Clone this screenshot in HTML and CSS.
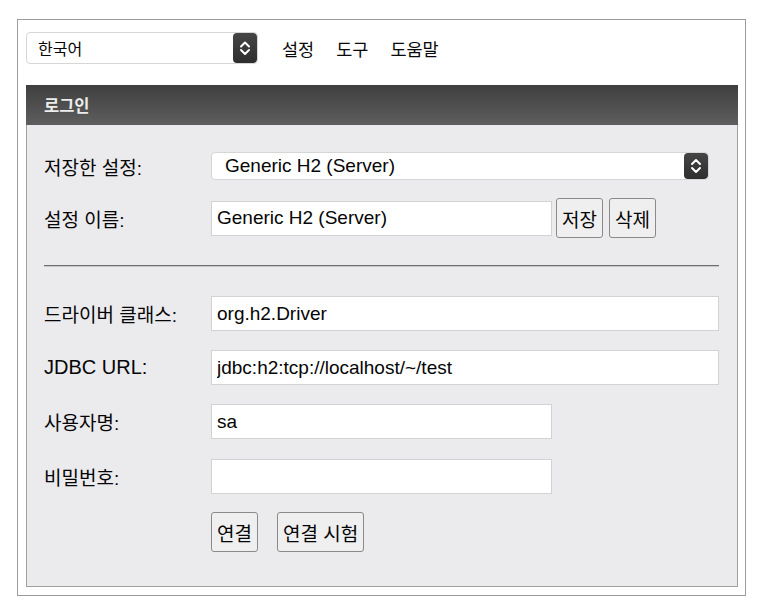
FILE: index.html
```html
<!DOCTYPE html>
<html lang="ko">
<head>
<meta charset="utf-8">
<title>H2 Console 로그인</title>
<link rel="stylesheet" href="styles.css">
</head>
<body>
<div class="frame">
  <div class="topbar">
    <div class="select lang-select">
      <span class="select-text">한국어</span>
      <span class="select-arrow"><svg width="24" height="32" viewBox="0 0 24 32"><path d="M8 14.5 L12 10.5 L16 14.5 M8 18 L12 22 L16 18" fill="none" stroke="#fff" stroke-width="2" stroke-linecap="round" stroke-linejoin="round"/></svg></span>
    </div>
    <nav class="menu">
      <span class="menu-item">설정</span>
      <span class="menu-item">도구</span>
      <span class="menu-item">도움말</span>
    </nav>
  </div>

  <div class="panel">
    <div class="panel-head">로그인</div>
    <div class="panel-body">
      <div class="row row-saved">
        <span class="label">저장한 설정:</span>
        <div class="select saved-select">
          <span class="select-text">Generic H2 (Server)</span>
          <span class="select-arrow"><svg width="24" height="28" viewBox="0 0 24 28"><path d="M8 12 L12 8 L16 12 M8 16 L12 20 L16 16" fill="none" stroke="#fff" stroke-width="2" stroke-linecap="round" stroke-linejoin="round"/></svg></span>
        </div>
      </div>
      <div class="row row-name">
        <span class="label">설정 이름:</span>
        <input class="field short" type="text" value="Generic H2 (Server)">
        <button class="btn btn-save">저장</button>
        <button class="btn btn-del">삭제</button>
      </div>
      <hr class="divider">
      <div class="row row-driver">
        <span class="label">드라이버 클래스:</span>
        <input class="field long" type="text" value="org.h2.Driver">
      </div>
      <div class="row row-url">
        <span class="label label-latin">JDBC URL:</span>
        <input class="field long" type="text" value="jdbc:h2:tcp://localhost/~/test">
      </div>
      <div class="row row-user">
        <span class="label">사용자명:</span>
        <input class="field short" type="text" value="sa">
      </div>
      <div class="row row-pass">
        <span class="label">비밀번호:</span>
        <input class="field short" type="password" value="">
      </div>
      <div class="row row-actions">
        <span class="label"></span>
        <button class="btn btn-connect">연결</button>
        <button class="btn btn-test">연결 시험</button>
      </div>
    </div>
  </div>
</div>
</body>
</html>
```

FILE: styles.css
```css
* { box-sizing: border-box; }

html, body {
  margin: 0;
  padding: 0;
  background: #ffffff;
}

body {
  font-family: "Liberation Sans", "Noto Sans CJK KR", sans-serif;
  color: #050505;
}

.frame {
  margin: 19px 0 0 17px;
  width: 729px;
  height: 577px;
  border: 1px solid #9c9c9c;
  padding: 12px 7px 8px 8px;
  display: flex;
  flex-direction: column;
}

/* top bar */
.topbar {
  display: flex;
  align-items: center;
  height: 32px;
}

.select {
  display: flex;
  align-items: stretch;
  background: #ffffff;
  border: 1px solid #d6d6d6;
  border-radius: 4px;
  overflow: hidden;
}

.select-text {
  flex: 1;
  display: flex;
  align-items: center;
}

.select-arrow {
  width: 24px;
  flex: none;
  background: linear-gradient(#454545, #2e2e2e);
  border-radius: 4px;
  display: flex;
  align-items: center;
  justify-content: center;
}

.lang-select {
  width: 232px;
  height: 32px;
  font-family: "Noto Sans CJK KR", sans-serif;
  font-size: 16px;
}

.lang-select .select-text {
  padding-left: 11px;
}

.menu {
  display: flex;
  margin-left: 24px;
  gap: 22px;
  font-family: "Noto Sans CJK KR", sans-serif;
  font-size: 17.5px;
  color: #080808;
}

/* panel */
.panel {
  margin-top: 21px;
  flex: 1;
  border: 1px solid #a0a0a0;
  border-top: none;
  background: #ebeaed;
  display: flex;
  flex-direction: column;
}

.panel-head {
  height: 40px;
  margin: 0 -1px;
  background: linear-gradient(#3f3f3f, #5e5e5e);
  color: #ececec;
  font-family: "Noto Sans CJK KR", sans-serif;
  font-weight: bold;
  font-size: 16.5px;
  display: flex;
  align-items: center;
  padding-left: 18px;
}

.panel-body {
  padding: 27px 18px 0 17px;
  display: flex;
  flex-direction: column;
}

.row {
  display: flex;
  align-items: center;
}

.label {
  width: 167px;
  flex: none;
  font-size: 19px;
  font-family: "Liberation Sans", "Noto Sans CJK KR", sans-serif;
  color: #050505;
}

.label-latin {
  font-size: 20px;
}

.saved-select {
  width: 498px;
  height: 28px;
  font-size: 19px;
}

.saved-select .select-text {
  padding-left: 13px;
}

.field {
  height: 35px;
  border: 1px solid #d2d2d2;
  background: #ffffff;
  font-family: "Liberation Sans", "Noto Sans CJK KR", sans-serif;
  font-size: 19px;
  color: #050505;
  padding: 0 5px;
  outline: none;
  margin: 0;
}

.field.long { width: 508px; }
.field.short { width: 341px; }

.btn {
  height: 40px;
  border: 1px solid #8a8a8a;
  border-radius: 3px;
  background: #efeff0;
  font-family: "Noto Sans CJK KR", sans-serif;
  font-size: 19px;
  color: #050505;
  padding: 0 5px;
  margin: 0;
}

.row-name { margin-top: 18px; }
.btn-save { margin-left: 4px; }
.btn-del { margin-left: 6px; }

.divider {
  margin: 27px 0 0 0;
  border: none;
  border-top: 1px solid #6d6d6d;
  border-bottom: 1px solid #c8c8c8;
  height: 0;
}

.row-driver { margin-top: 29px; }
.row-url { margin-top: 19px; }
.row-user { margin-top: 19px; }
.row-pass { margin-top: 20px; }
.row-actions { margin-top: 18px; }

.btn-test { margin-left: 19px; }
```
